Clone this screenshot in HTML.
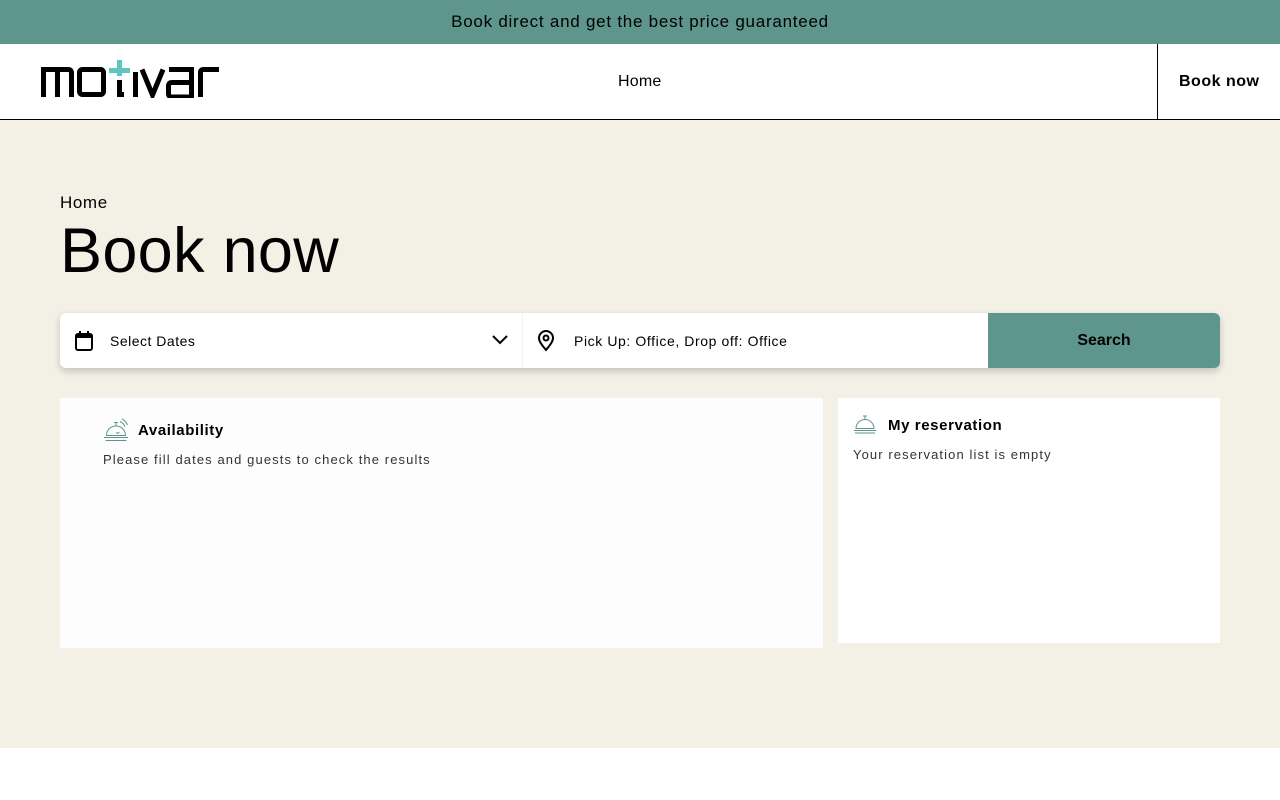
<!DOCTYPE html>
<html><head><meta charset="utf-8"><style>
*{margin:0;padding:0;box-sizing:border-box}
body{width:1280px;height:800px;font-family:"Liberation Sans",sans-serif;background:#fff;position:relative;overflow:hidden;color:#000}
.top{height:44px;background:#5e968d;text-align:center;line-height:44px;font-size:17px;letter-spacing:.75px}
.nav{height:76px;border-bottom:1px solid #000;position:relative}
.nav .home{position:absolute;left:618px;top:29px;font-size:16px;letter-spacing:.2px}
.nav .book{position:absolute;left:1157px;top:0;width:123px;height:75px;border-left:1px solid #000;font-weight:bold;font-size:16px;line-height:75px;padding-left:21px;letter-spacing:.5px}
.main{position:absolute;top:120px;left:0;width:1280px;height:628px;background:#f3f1e6}
.bc{position:absolute;left:60px;top:73px;font-size:17px;letter-spacing:.6px}
h1{position:absolute;left:60px;top:95px;font-size:63px;font-weight:normal;letter-spacing:.3px}
.search{position:absolute;left:60px;top:193px;width:1160px;height:55px;background:#fff;border-radius:6px;box-shadow:0 3px 8px rgba(0,0,0,.2);font-size:14px;letter-spacing:.5px}
.search .sd{position:absolute;left:50px;top:20px}
.search .pu{position:absolute;left:514px;top:20px;letter-spacing:.6px}
.search .div{position:absolute;left:462px;top:0;width:1px;height:55px;background:#f2f2f2}
.search .btn{position:absolute;right:0;top:0;width:232px;height:55px;background:#5e968d;border-radius:0 6px 6px 0;text-align:center;line-height:55px;font-weight:bold;font-size:16px;letter-spacing:0}
.card{position:absolute;background:#fdfdfd}
.card b{position:absolute;font-size:15px;letter-spacing:.6px}
.card p{position:absolute;font-size:13px;color:#333;letter-spacing:1.1px}
</style></head><body>
<div class="top">Book direct and get the best price guaranteed</div>
<div class="nav">
<svg style="position:absolute;left:41px;top:16px" width="180" height="38" viewBox="0 0 180 38" fill="none" stroke-width="5">
<path d="M2.5 37V9.5H27Q30.5 9.5 30.5 13V37M16.5 9.5V37" stroke="#000"/>
<rect x="38.5" y="9.5" width="24" height="25" rx="3" stroke="#000"/>
<path d="M78.5 0V16M68 10.5H89" stroke="#5ec7bd"/>
<path d="M78.5 20V34.5H83" stroke="#000"/>
<path d="M94.5 12V37" stroke="#000"/>
<path d="M101 9.5L111.5 35L122 9.5" stroke="#000"/>
<path d="M128 9.5H150.5V37H131Q127.5 37 127.5 33.5V26Q127.5 22.5 131 22.5H150" stroke="#000"/>
<path d="M159.5 37V12.5Q159.5 9.5 162.5 9.5H178" stroke="#000"/>
</svg>
<div class="home">Home</div>
<div class="book">Book now</div>
</div>
<div class="main">
<div class="bc">Home</div>
<h1>Book now</h1>
<div class="search">
<svg style="position:absolute;left:15px;top:18px" width="18" height="20" viewBox="0 0 18 20"><rect x="1" y="3" width="16" height="16" rx="2" fill="none" stroke="#000" stroke-width="2"/><rect x="1" y="3" width="16" height="4" fill="#000"/><path d="M5 0v4M13 0v4" stroke="#000" stroke-width="2"/></svg>
<div class="sd">Select Dates</div>
<svg style="position:absolute;left:432px;top:22px" width="16" height="10" viewBox="0 0 16 10"><path d="M1 1l7 7 7-7" fill="none" stroke="#000" stroke-width="2"/></svg>
<div class="div"></div>
<svg style="position:absolute;left:477px;top:17px" width="18" height="22" viewBox="0 0 18 22"><path d="M9 20C4 14 2 11 2 8a7 7 0 0114 0c0 3-2 6-7 12z" fill="none" stroke="#000" stroke-width="2"/><circle cx="9" cy="8" r="2.5" fill="none" stroke="#000" stroke-width="2"/></svg>
<div class="pu">Pick Up: Office, Drop off: Office</div>
<div class="btn">Search</div>
</div>
<div class="card" style="left:60px;top:278px;width:763px;height:250px">
<svg style="position:absolute;left:43px;top:20px" width="26" height="24" viewBox="0 0 26 24" fill="none" stroke="#5e968d" stroke-width="1"><path d="M3.5 17.5a9.5 9.5 0 0119 0z"/><path d="M1 19.5h24M2.5 22.5h21M13 8V4.5M11 4.5h4M17 3.5q3.5 1.5 5 5M19 1q4 2 5.5 6M13 14.5l1.5 1 2-1.5"/></svg>
<b style="left:78px;top:24px">Availability</b>
<p style="left:43px;top:54px">Please fill dates and guests to check the results</p>
</div>
<div class="card" style="left:838px;top:278px;width:382px;height:245px;background:#fff">
<svg style="position:absolute;left:15px;top:16px" width="24" height="20" viewBox="0 0 24 20" fill="none" stroke="#5e968d" stroke-width="1"><path d="M3 14.5a9 9 0 0118 0z"/><path d="M1 16.5h22M2 19h20M12 5.5V2M10 2h4"/></svg>
<b style="left:50px;top:19px">My reservation</b>
<p style="left:15px;top:49px">Your reservation list is empty</p>
</div>
</div>
</body></html>
